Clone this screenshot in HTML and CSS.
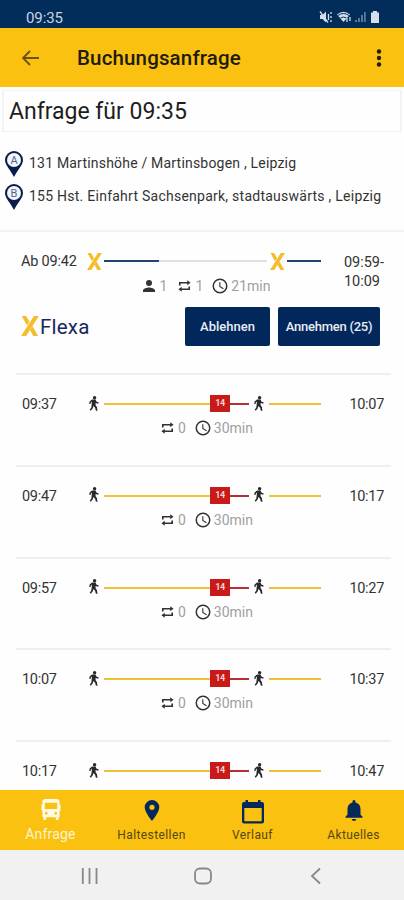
FILE: index.html
```html
<!DOCTYPE html>
<html lang="de">
<head>
<meta charset="utf-8">
<title>Buchungsanfrage</title>
<link rel="stylesheet" href="styles.css">
</head>
<body>
<svg class="defs" width="0" height="0">
  <symbol id="walk" viewBox="0 0 10 15"><circle cx="5.600" cy="1.700" r="1.700"/><path d="M3 3.400h3.500l.9 2.200 2.300.9-.5 1.200-2.600-.7v2.300l1.300 1.800.6 3.600H6.900l-.8-2.900-1.700-1.700-.6 2.100-2 2.500-1.100-.9 1.600-2.200.5-4.200v-1.900l-.9.8-.3 1.800H.3l.3-2.700z"/></symbol>
  <symbol id="repeat" viewBox="0 0 14 13"><path d="M1 6V2.200h9V.3L13.600 3 10 5.700V3.800H2.800V6zM13 7v3.800H4v1.900L.4 10 4 7.300v1.900h7.200V7z"/></symbol>
  <symbol id="clock" viewBox="0 0 24 24"><path d="M12 2a10 10 0 1 0 0 20 10 10 0 0 0 0-20zm0 18a8 8 0 1 1 0-16 8 8 0 0 1 0 16zm.5-13H11v6l5.200 3.200.8-1.300-4.500-2.700z"/></symbol>
  <symbol id="person" viewBox="4 4 16 16"><path d="M12 12a4 4 0 1 0 0-8 4 4 0 0 0 0 8zm0 2c-2.700 0-8 1.300-8 4v2h16v-2c0-2.700-5.300-4-8-4z"/></symbol>
  <symbol id="flexa" viewBox="0 0 16 18"><path d="M.5 0h4l3 5.200-2.200 3.400zM11.500 0H16L4.500 18H0zM10.300 9.300L15.300 18h-4.200L8 12.800z"/></symbol>
</svg>

<div class="status">
  <span class="status-time">09:35</span>
  <svg class="status-icons" viewBox="0 0 62 14">
    <path d="M1 5h2.500L7 1.500v11L3.500 9H1z"/><path class="stroke" d="M1 1.500l8 11M9.500 4v6M12 2v2M12 6v2M12 10v2"/>
    <path d="M18 4.500q6.500-5.500 13 0L24.500 12z"/><path class="cut" d="M19 5.500q5.500-4 11 0M21.500 8q3-2 6 0"/><path class="stroke" d="M28 8v4M31 7v4"/>
    <path class="dim" d="M36 10h2v2h-2zM39 8h2v4h-2zM42 5h2v7h-2zM45 2h1.800v10H45z"/>
    <path d="M54 1h4v1.500h2V13h-8V2.500h2z"/>
  </svg>
</div>

<header class="appbar">
  <svg class="back" viewBox="0 0 17 16"><path d="M17 8H1M8 1L1 8l7 7"/></svg>
  <h1>Buchungsanfrage</h1>
  <svg class="more" viewBox="0 0 6 18"><circle cx="3" cy="2.500" r="2.200"/><circle cx="3" cy="9" r="2.200"/><circle cx="3" cy="15.500" r="2.200"/></svg>
</header>

<main>
  <h2>Anfrage für 09:35</h2>
  <section class="stops">
    <div class="stop">
      <svg class="pin" viewBox="0 0 18 26"><path d="M9 0a9 9 0 0 0-9 9c0 5 5 9 9 17 4-8 9-12 9-17a9 9 0 0 0-9-9z"/><circle cx="9" cy="9" r="7"/><text x="9" y="12.800">A</text></svg>
      <span class="from">131 Martinshöhe / Martinsbogen , Leipzig</span>
    </div>
    <div class="stop">
      <svg class="pin" viewBox="0 0 18 26"><path d="M9 0a9 9 0 0 0-9 9c0 5 5 9 9 17 4-8 9-12 9-17a9 9 0 0 0-9-9z"/><circle cx="9" cy="9" r="7"/><text x="9" y="12.800">B</text></svg>
      <span class="to">155 Hst. Einfahrt Sachsenpark, stadtauswärts , Leipzig</span>
    </div>
  </section>

  <section class="offer">
    <div class="trip">
      <span class="dep">Ab 09:42</span>
      <div class="route">
        <svg class="x"><use href="#flexa"/></svg><i class="seg navy long"></i><i class="seg grey"></i><svg class="x"><use href="#flexa"/></svg><i class="seg navy short"></i>
      </div>
      <span class="arr">09:59-<br>10:09</span>
      <div class="meta"><svg class="person"><use href="#person"/></svg><span class="pax">1</span><svg class="rep"><use href="#repeat"/></svg><span class="changes">1</span><svg class="clk"><use href="#clock"/></svg><span>21min</span></div>
    </div>
    <div class="actions">
      <svg class="logo"><use href="#flexa"/></svg><span class="brand">Flexa</span>
      <button class="decline">Ablehnen</button><button class="accept">Annehmen (25)</button>
    </div>
  </section>

  <section class="trips">
    <article class="trip"><span class="dep">09:37</span><div class="route"><svg class="walk"><use href="#walk"/></svg><i class="seg gold long"></i><b class="line">14</b><i class="seg red"></i><svg class="walk"><use href="#walk"/></svg><i class="seg gold last"></i></div><span class="arr">10:07</span><div class="meta"><svg class="rep"><use href="#repeat"/></svg><span class="changes">0</span><svg class="clk"><use href="#clock"/></svg><span>30min</span></div></article>
    <article class="trip"><span class="dep">09:47</span><div class="route"><svg class="walk"><use href="#walk"/></svg><i class="seg gold long"></i><b class="line">14</b><i class="seg red"></i><svg class="walk"><use href="#walk"/></svg><i class="seg gold last"></i></div><span class="arr">10:17</span><div class="meta"><svg class="rep"><use href="#repeat"/></svg><span class="changes">0</span><svg class="clk"><use href="#clock"/></svg><span>30min</span></div></article>
    <article class="trip"><span class="dep">09:57</span><div class="route"><svg class="walk"><use href="#walk"/></svg><i class="seg gold long"></i><b class="line">14</b><i class="seg red"></i><svg class="walk"><use href="#walk"/></svg><i class="seg gold last"></i></div><span class="arr">10:27</span><div class="meta"><svg class="rep"><use href="#repeat"/></svg><span class="changes">0</span><svg class="clk"><use href="#clock"/></svg><span>30min</span></div></article>
    <article class="trip"><span class="dep">10:07</span><div class="route"><svg class="walk"><use href="#walk"/></svg><i class="seg gold long"></i><b class="line">14</b><i class="seg red"></i><svg class="walk"><use href="#walk"/></svg><i class="seg gold last"></i></div><span class="arr">10:37</span><div class="meta"><svg class="rep"><use href="#repeat"/></svg><span class="changes">0</span><svg class="clk"><use href="#clock"/></svg><span>30min</span></div></article>
    <article class="trip"><span class="dep">10:17</span><div class="route"><svg class="walk"><use href="#walk"/></svg><i class="seg gold long"></i><b class="line">14</b><i class="seg red"></i><svg class="walk"><use href="#walk"/></svg><i class="seg gold last"></i></div><span class="arr">10:47</span></article>
  </section>
</main>

<nav class="tabs">
  <a class="active"><svg viewBox="0 0 20 22"><path fill-rule="evenodd" d="M4 0h12q3 0 3 3v3h1v6h-1v6q0 1-1 1v2q0 1-1 1h-1q-1 0-1-1v-2H5v2q0 1-1 1H3q-1 0-1-1v-2q-1 0-1-1v-6H0V6h1V3q0-3 3-3zM3.500 4v6.500h13V4zM5 13.500a1.500 1.500 0 1 0 0 3 1.500 1.500 0 0 0 0-3zm10 0a1.500 1.500 0 1 0 0 3 1.500 1.500 0 0 0 0-3z"/></svg><span>Anfrage</span></a>
  <a><svg viewBox="2 1 16 21"><path fill-rule="evenodd" d="M10 1a7.300 7.300 0 0 0-7.300 7.300C2.700 13.500 10 22 10 22s7.300-8.500 7.300-13.700A7.300 7.300 0 0 0 10 1zm0 4.700a2.600 2.600 0 1 1 0 5.200 2.600 2.600 0 0 1 0-5.200z"/></svg><span class="t2">Haltestellen</span></a>
  <a><svg class="cal" viewBox="0 0 22 24"><path fill-rule="evenodd" d="M3.500 0H6v2h10V0h2.500v2H20q2 0 2 2v17.500q0 2-2 2H2q-2 0-2-2V4q0-2 2-2h1.500zM2.300 8v13.200h17.400V8z"/></svg><span class="t3">Verlauf</span></a>
  <a><svg viewBox="1 1 18 21"><path d="M10 22q2.200 0 2.200-2H7.800q0 2 2.200 2zm6.500-6.500V10q0-5.200-5-6.500V2.500a1.500 1.500 0 0 0-3 0v1q-5 1.300-5 6.500v5.500L1.500 17.700v1.100h17v-1.100z"/></svg><span class="t4">Aktuelles</span></a>
</nav>

<footer class="sysnav">
  <svg viewBox="0 0 18 18"><path d="M1.800 1v16M8.500 1v16M15.500 1v16"/></svg>
  <svg viewBox="0 0 18 18"><rect x="1" y="1.500" width="16" height="15" rx="5"/></svg>
  <svg viewBox="0 0 18 18"><path d="M13 1.500L5 9l8 7.500"/></svg>
</footer>
</body>
</html>
```
FILE: styles.css
```css
* { box-sizing: border-box; }
body { margin: 0; width: 404px; height: 900px; overflow: hidden; display: flex; flex-direction: column; background: #fefefe; color: #333; font: 14px/18px Roboto, "Liberation Sans", sans-serif; }
svg { display: block; flex: none; }
.defs { position: absolute; }

.status { height: 28px; flex: none; display: flex; justify-content: space-between; padding: 8px 23px 0 26px; background: #022c5a; color: #c9d5e2; }
.status-time { font-size: 15px; line-height: 20px; letter-spacing: -.1px; }
.status-icons { width: 62px; height: 14px; margin-top: 2px; fill: #d5deea; }
.status-icons .stroke { stroke: #d5deea; stroke-width: 1.300; fill: none; }
.status-icons .cut { stroke: #022c5a; stroke-width: 1; fill: none; }
.status-icons .dim { fill: #5c7793; }

.appbar { height: 59px; flex: none; display: flex; align-items: center; padding: 1px 22px 0; background: #fac111; }
.back { width: 17px; height: 16px; fill: none; stroke: #6b5413; stroke-width: 1.800; }
h1 { margin: 0 auto 0 38px; font-size: 20.500px; line-height: 26px; letter-spacing: .15px; font-weight: 500; color: #211b0b; }
.more { width: 6px; height: 18px; fill: #231d0c; }

main { flex: 1; min-height: 0; overflow: hidden; }
h2 { height: 42px; margin: 3px 2px 0; padding: 0 5px; border: 1px solid #f3f3f3; border-width: 1px 2px; font-size: 23px; line-height: 42px; font-weight: 400; color: #1d1d1d; }
.stops { height: 100px; padding: 19px 5px 0; border-bottom: 2px solid #f2f2f2; }
.stop { display: flex; height: 33px; gap: 6px; line-height: 24px; }
.from { letter-spacing: .2px; }
.to { letter-spacing: .25px; }
.pin { width: 18px; height: 26px; fill: #0a1c4b; }
.pin circle { fill: #f3f5fa; }
.pin text { font-size: 11px; text-anchor: middle; fill: #53648c; }

.trip { display: grid; grid-template-columns: 73px 232px 1fr; grid-template-rows: 34px 1fr; align-items: center; }
.dep { padding-left: 6px; font-size: 14.500px; letter-spacing: -.3px; }
.arr { justify-self: end; padding-right: 7px; font-size: 14.500px; letter-spacing: -.3px; }
.route { display: flex; align-items: center; }
.meta { grid-column: 2; display: flex; align-items: center; justify-content: center; color: #a0a0a0; line-height: 16px; }
.meta svg { fill: #333; }
.rep { width: 13px; height: 12px; margin-right: 4px; }
.clk { width: 18px; height: 18px; margin: 0 2px 0 8px; }
.person { width: 12px; height: 12px; margin-right: 5px; }
.pax { margin-right: 11px; }
.seg { height: 2px; }
.navy { background: #204373; }
.grey { background: #e0e0e0; width: 108px; margin-right: 3px; }
.gold { background: #efc13a; }
.red { background: #b92d34; width: 19px; margin-right: 5px; }
.navy.long { width: 55px; }
.navy.short { width: 34px; }

.offer { height: 141px; padding: 12px 13px 0 16px; }
.offer .trip { height: 60px; }
.offer .dep { padding-left: 5px; letter-spacing: -.2px; padding-top: 2px; }
.offer .route { margin-left: -2px; }
.offer .arr { grid-row: 1 / 3; grid-column: 3; align-self: start; padding: 9px 7px 0 0; line-height: 19px; letter-spacing: 0; }
.offer .meta { align-self: start; margin: -1px 0 0 3px; }
.x { width: 15px; height: 17px; margin-right: 2px; fill: #f5bd2b; }
.actions { display: flex; align-items: center; height: 42px; margin-top: 1px; }
.logo { width: 18px; height: 20px; margin-left: 5px; fill: #f5bd2b; }
.brand { margin: 2px auto 0 1px; font-size: 20.500px; letter-spacing: .2px; color: #17275c; }
button { height: 39px; border: 0; border-radius: 2px; background: #02275a; color: #e8edf5; font: 500 13px/39px Roboto, sans-serif; padding: 0; }
.decline { width: 85px; margin-right: 8px; }
.accept { width: 102px; margin-right: 11px; letter-spacing: -.25px; }

.trips { padding: 0 13px 0 16px; }
.trips .trip { height: 91.750px; padding-top: 12px; border-top: 2px solid #efefef; grid-template-rows: 34px 16px; align-content: start; }
.trips .dep, .trips .arr { padding-top: 2px; }
.trips .meta { margin: -2px 0 0 4px; }
.walk { width: 10px; height: 15px; fill: #292929; margin: -2px 5px 0 0; }
.gold.long { width: 106px; }
.gold.last { width: 52px; }
.line { width: 20px; height: 17px; margin-top: -1px; background: #c81a19; color: #f5d2d0; font-size: 9px; line-height: 17px; letter-spacing: -.5px; text-align: center; }

.tabs { flex: none; height: 60px; display: grid; grid-template-columns: repeat(4, 101px); background: #fac111; color: #54470f; font-size: 12px; }
.tabs a { display: flex; flex-direction: column; align-items: center; padding-top: 10px; line-height: 14px; }
.tabs svg { width: 20px; height: 21px; fill: #03295b; margin-bottom: 7px; }
.tabs svg.cal { width: 22px; height: 24px; margin-bottom: 4px; }
.tabs .t2 { letter-spacing: .4px; }
.tabs .t3 { letter-spacing: .4px; }
.tabs .t4 { letter-spacing: .35px; }
.tabs .active { color: #fff4cd; font-size: 14px; letter-spacing: .2px; padding-top: 9px; }
.tabs .active svg { fill: #fffae5; }
.sysnav { flex: none; height: 50px; display: flex; justify-content: space-between; align-items: center; padding: 2px 79px 0 81px; background: #f1f1f1; }
.sysnav svg { width: 18px; height: 18px; fill: none; stroke: #888; stroke-width: 1.800; }
```
